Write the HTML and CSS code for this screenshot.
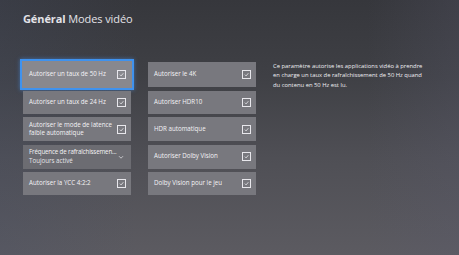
FILE: index.html
```html
<!DOCTYPE html>
<html lang="fr">
<head>
<meta charset="utf-8">
<link rel="stylesheet" href="styles.css">
</head>
<body>
<div class="page">
  <h1 class="title"><b>Général</b> Modes vidéo</h1>
  <div class="grid">
    <div class="col">
      <div class="tile focused"><span class="label">Autoriser un taux de 50 Hz</span><span class="box"><svg viewBox="0 0 10 10"><path d="M2.6 5.2 L4.4 7 L7.6 3.2"/></svg></span></div>
      <div class="tile"><span class="label">Autoriser un taux de 24 Hz</span><span class="box"><svg viewBox="0 0 10 10"><path d="M2.6 5.2 L4.4 7 L7.6 3.2"/></svg></span></div>
      <div class="tile"><span class="label">Autoriser le mode de latence<br>faible automatique</span><span class="box"><svg viewBox="0 0 10 10"><path d="M2.6 5.2 L4.4 7 L7.6 3.2"/></svg></span></div>
      <div class="tile dropdown"><span class="label tight">Fréquence de rafraîchissemen...<br><span class="sub">Toujours activé</span></span><span class="chev"><svg viewBox="0 0 10 10"><path d="M2.5 4 L5 6.5 L7.5 4"/></svg></span></div>
      <div class="tile"><span class="label">Autoriser la YCC 4:2:2</span><span class="box"><svg viewBox="0 0 10 10"><path d="M2.6 5.2 L4.4 7 L7.6 3.2"/></svg></span></div>
    </div>
    <div class="col">
      <div class="tile"><span class="label">Autoriser le 4K</span><span class="box"><svg viewBox="0 0 10 10"><path d="M2.6 5.2 L4.4 7 L7.6 3.2"/></svg></span></div>
      <div class="tile"><span class="label">Autoriser HDR10</span><span class="box"><svg viewBox="0 0 10 10"><path d="M2.6 5.2 L4.4 7 L7.6 3.2"/></svg></span></div>
      <div class="tile"><span class="label">HDR automatique</span><span class="box"><svg viewBox="0 0 10 10"><path d="M2.6 5.2 L4.4 7 L7.6 3.2"/></svg></span></div>
      <div class="tile"><span class="label">Autoriser Dolby Vision</span><span class="box"><svg viewBox="0 0 10 10"><path d="M2.6 5.2 L4.4 7 L7.6 3.2"/></svg></span></div>
      <div class="tile"><span class="label">Dolby Vision pour le jeu</span><span class="box"><svg viewBox="0 0 10 10"><path d="M2.6 5.2 L4.4 7 L7.6 3.2"/></svg></span></div>
    </div>
    <p class="desc">Ce paramètre autorise les applications vidéo à prendre en charge un taux de rafraîchissement de 50 Hz quand du contenu en 50 Hz est lu.</p>
  </div>
</div>
</body>
</html>
```
FILE: styles.css
```css
html, body {
  margin: 0;
  padding: 0;
  width: 459px;
  height: 255px;
  overflow: hidden;
}
body {
  background:
    linear-gradient(90deg, rgba(70,78,100,0.25) 0%, rgba(0,0,0,0) 30%, rgba(0,0,0,0) 80%, rgba(90,90,110,0.25) 100%),
    linear-gradient(180deg, #36373c 0%, #3f4045 30%, #4f4f55 62%, #5c5b61 100%);
  font-family: "Open Sans", "Liberation Sans", sans-serif;
  color: #eceaee;
}
.page {
  padding: 11px 0 0 23px;
}
.title {
  margin: 0;
  font-size: 11px;
  line-height: 15px;
  font-weight: 400;
  color: #e4e3e8;
  letter-spacing: -0.1px;
}
.title b {
  font-weight: 700;
}
.grid {
  margin-top: 36px;
  display: grid;
  grid-template-columns: 108px 108px 152px;
  column-gap: 17px;
}
.col {
  display: grid;
  grid-template-rows: 25px 23px 24px 24px 23px;
  row-gap: 3.5px;
}
.tile {
  background: #78787e;
  display: flex;
  align-items: center;
  justify-content: space-between;
  padding: 0 5px 0 6px;
  font-size: 6.2px;
  line-height: 8.4px;
  color: #f4f3f6;
  min-width: 0;
}
.label {
  white-space: nowrap;
  min-width: 0;
}
.label.tight {
  letter-spacing: -0.15px;
}
.tile.focused {
  background: #88888e;
  box-shadow: 0 0 0 1px #88888e, 0 0 0 3px #3f92ee, 0 0 4px 3px rgba(70,150,245,0.55);
}
.tile.dropdown {
  background: #6c6c72;
}
.sub {
  color: #e6e5ea;
  letter-spacing: 0;
}
.box {
  width: 9px;
  height: 9px;
  border: 1px solid #e8e7ec;
  box-sizing: border-box;
  display: flex;
  flex: none;
}
.box svg {
  width: 100%;
  height: 100%;
  fill: none;
  stroke: #f0eff3;
  stroke-width: 1.1;
}
.chev {
  width: 8px;
  height: 8px;
  display: flex;
  flex: none;
  margin-right: 1px;
}
.chev svg {
  width: 100%;
  height: 100%;
  fill: none;
  stroke: #e8e7ec;
  stroke-width: 0.9;
}
.desc {
  margin: 0;
  font-size: 5.85px;
  line-height: 9.4px;
  color: #f0eff3;
  width: 152px;
}
```
